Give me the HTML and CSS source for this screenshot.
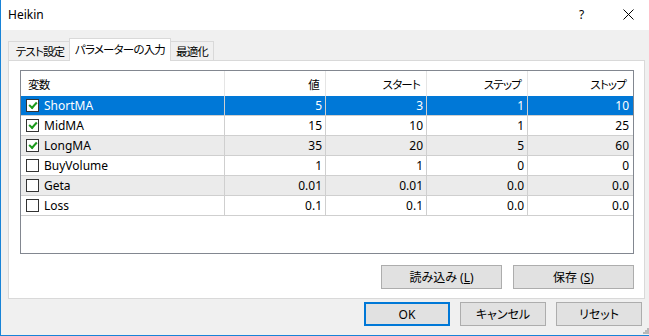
FILE: index.html
```html
<!DOCTYPE html>
<html lang="ja">
<head>
  <meta charset="UTF-8">
  <meta name="viewport" content="width=device-width, initial-scale=1.0">
  <title>Heikin</title>
  <link rel="stylesheet" href="styles.css">
</head>
<body>
  <div class="window">
    <div class="titlebar">
      <span class="title">Heikin</span>
      <span class="help">?</span>
      <svg class="close" width="11" height="11" viewBox="0 0 11 11">
        <path d="M0.5 0.5 L10.5 10.5 M10.5 0.5 L0.5 10.5" stroke="#000" stroke-width="1" fill="none"/>
      </svg>
    </div>

    <div class="content">
      <div class="tabs">
        <div class="tab tab-test">テスト設定</div>
        <div class="tab tab-param active">パラメーターの入力</div>
        <div class="tab tab-opt">最適化</div>
      </div>

      <div class="panel">
        <div class="list">
          <div class="row head">
            <div class="cell name">変数</div>
            <div class="cell">値</div>
            <div class="cell">スタート</div>
            <div class="cell">ステップ</div>
            <div class="cell">ストップ</div>
          </div>
          <div class="row selected">
            <div class="cell name"><span class="check on"></span>ShortMA</div>
            <div class="cell">5</div>
            <div class="cell">3</div>
            <div class="cell">1</div>
            <div class="cell">10</div>
          </div>
          <div class="row">
            <div class="cell name"><span class="check on"></span>MidMA</div>
            <div class="cell">15</div>
            <div class="cell">10</div>
            <div class="cell">1</div>
            <div class="cell">25</div>
          </div>
          <div class="row alt">
            <div class="cell name"><span class="check on"></span>LongMA</div>
            <div class="cell">35</div>
            <div class="cell">20</div>
            <div class="cell">5</div>
            <div class="cell">60</div>
          </div>
          <div class="row">
            <div class="cell name"><span class="check"></span>BuyVolume</div>
            <div class="cell">1</div>
            <div class="cell">1</div>
            <div class="cell">0</div>
            <div class="cell">0</div>
          </div>
          <div class="row alt">
            <div class="cell name"><span class="check"></span>Geta</div>
            <div class="cell">0.01</div>
            <div class="cell">0.01</div>
            <div class="cell">0.0</div>
            <div class="cell">0.0</div>
          </div>
          <div class="row">
            <div class="cell name"><span class="check"></span>Loss</div>
            <div class="cell">0.1</div>
            <div class="cell">0.1</div>
            <div class="cell">0.0</div>
            <div class="cell">0.0</div>
          </div>
        </div>

        <div class="panel-buttons">
          <button class="btn wide">読み込み (<u>L</u>)</button>
          <button class="btn wide">保存 (<u>S</u>)</button>
        </div>
      </div>

      <div class="dialog-buttons">
        <button class="btn default">OK</button>
        <button class="btn">キャンセル</button>
        <button class="btn">リセット</button>
      </div>
    </div>

    <svg class="grip" width="6" height="6" viewBox="0 0 6 6">
      <rect x="4" y="0" width="2" height="2" fill="#b8b8b8"/>
      <rect x="2" y="2" width="2" height="2" fill="#b8b8b8"/>
      <rect x="4" y="2" width="2" height="2" fill="#b8b8b8"/>
      <rect x="0" y="4" width="2" height="2" fill="#b8b8b8"/>
      <rect x="2" y="4" width="2" height="2" fill="#b8b8b8"/>
      <rect x="4" y="4" width="2" height="2" fill="#b8b8b8"/>
    </svg>
  </div>
</body>
</html>
```

FILE: styles.css
```css
body {
  margin: 0;
  font-family: "Noto Sans", "Noto Sans CJK JP", sans-serif;
  font-size: 12px;
  font-feature-settings: "palt";
  color: #000;
  background: #fff;
}
.window {
  position: relative;
  width: 649px;
  height: 336px;
  box-sizing: border-box;
  border-left: 1px solid #1883d7;
  border-bottom: 1px solid #1883d7;
  background: #f0f0f0;
  overflow: hidden;
}
.titlebar {
  height: 30px;
  background: #fff;
  display: flex;
  align-items: center;
  padding-left: 7px;
}
.title {
  flex: 1;
  margin-top: -1px;
}
.help {
  width: 10px;
  margin-right: 34px;
  margin-top: -2px;
}
.close {
  margin-right: 15px;
  margin-top: -1px;
}
.content {
  padding: 8px 4px 0 7px;
}
.tabs {
  display: flex;
  align-items: flex-end;
  height: 22px;
}
.tab {
  height: 19px;
  line-height: 19px;
  box-sizing: border-box;
  border: 1px solid #d9d9d9;
  border-bottom: none;
  background: #f0f0f0;
  margin-left: -1px;
  font-size: 11.5px;
  letter-spacing: -0.8px;
  text-align: center;
  white-space: nowrap;
}
.tab-test {
  width: 62px;
  margin-left: 0;
  padding-left: 2px;
}
.tab-param {
  width: 102px;
}
.tab-opt {
  width: 44px;
}
.tab.active {
  position: relative;
  z-index: 1;
  height: 23px;
  line-height: 22px;
  margin-bottom: -1px;
  background: #fff;
}
.panel {
  background: #fff;
  border: 1px solid #d9d9d9;
  padding: 9px 10px 9px 11px;
}
.list {
  height: 184px;
  box-sizing: border-box;
  border: 1px solid #828790;
  background: #fff;
}
.row {
  display: grid;
  grid-template-columns: 204px 101px 101px 101px 105px;
  height: 20px;
  border-bottom: 1px solid #cfcfcf;
  box-sizing: border-box;
}
.row.head {
  height: 25px;
  border-bottom: none;
}
.row.alt {
  background: #ebebeb;
}
.row.selected {
  background: #0078d7;
  color: #fff;
}
.cell {
  display: flex;
  align-items: center;
  justify-content: flex-end;
  padding-right: 3px;
  border-right: 1px solid #cfcfcf;
  white-space: nowrap;
}
.cell:last-child {
  border-right: none;
  padding-right: 4px;
}
.head .cell {
  border-right-color: #e5e5e5;
  padding-right: 6px;
  font-size: 11.5px;
  letter-spacing: -0.8px;
}
.head .cell:last-child {
  padding-right: 7px;
}
.cell.name {
  justify-content: flex-start;
  padding-left: 5px;
}
.head .cell.name {
  padding-left: 7px;
}
.check {
  width: 13px;
  height: 13px;
  box-sizing: border-box;
  border: 1px solid #333;
  background: #fff;
  margin-right: 5px;
  display: flex;
  align-items: center;
  justify-content: center;
}
.check.on::after {
  content: "";
  width: 6px;
  height: 3px;
  border-left: 2px solid #1e9a1e;
  border-bottom: 2px solid #1e9a1e;
  transform: rotate(-48deg);
  margin-top: -2px;
}
.panel-buttons {
  display: flex;
  justify-content: flex-end;
  gap: 11px;
  margin-top: 11px;
}
.btn {
  font: inherit;
  color: #000;
  height: 24px;
  width: 86px;
  padding: 0;
  background: #e1e1e1;
  border: 1px solid #adadad;
  box-sizing: border-box;
}
.btn.wide {
  width: 121px;
}
.btn.default {
  border: 2px solid #0078d7;
}
.dialog-buttons {
  display: flex;
  justify-content: flex-end;
  gap: 10px;
  margin-top: 3px;
  margin-right: 3px;
}
.grip {
  position: absolute;
  right: 0;
  bottom: 1px;
}
```
